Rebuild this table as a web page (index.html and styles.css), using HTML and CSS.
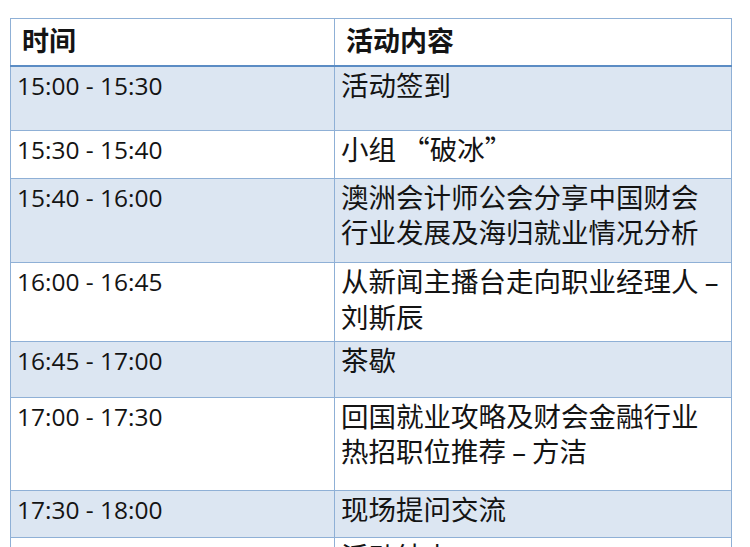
FILE: index.html
```html
<!DOCTYPE html>
<html lang="zh">
<head>
<meta charset="utf-8">
<link rel="stylesheet" href="styles.css">
</head>
<body>
<table class="agenda">
  <colgroup>
    <col class="col-time">
    <col class="col-act">
  </colgroup>
  <thead>
    <tr class="head">
      <th>时间</th>
      <th>活动内容</th>
    </tr>
  </thead>
  <tbody>
    <tr class="alt r1"><td class="time">15:00 - 15:30</td><td class="act">活动签到</td></tr>
    <tr class="r2"><td class="time">15:30 - 15:40</td><td class="act">小组 “破冰”</td></tr>
    <tr class="alt r3"><td class="time">15:40 - 16:00</td><td class="act">澳洲会计师公会分享中国财会<br>行业发展及海归就业情况分析</td></tr>
    <tr class="r4"><td class="time">16:00 - 16:45</td><td class="act">从新闻主播台走向职业经理人 <span class="lat">–</span><br>刘斯辰</td></tr>
    <tr class="alt r5"><td class="time">16:45 - 17:00</td><td class="act">茶歇</td></tr>
    <tr class="r6"><td class="time">17:00 - 17:30</td><td class="act">回国就业攻略及财会金融行业<br>热招职位推荐 <span class="lat">–</span> 方洁</td></tr>
    <tr class="alt r7"><td class="time">17:30 - 18:00</td><td class="act">现场提问交流</td></tr>
    <tr class="r8"><td class="time">18:00</td><td class="act">活动结束</td></tr>
  </tbody>
</table>
</body>
</html>
```

FILE: styles.css
```css
html, body {
  margin: 0;
  padding: 0;
  background: #ffffff;
  overflow: hidden;
}
body {
  padding: 18px 0 0 10px;
  font-family: "Open Sans", "Noto Sans CJK SC", sans-serif;
  color: #141414;
}
.agenda {
  border-collapse: collapse;
  table-layout: fixed;
  width: 721px;
}
.col-time { width: 324px; }
.col-act { width: 397px; }
.agenda th, .agenda td {
  border: 1px solid #8fb0d6;
  vertical-align: top;
  text-align: left;
  padding: 0 6px;
  white-space: nowrap;
}
.head { height: 47px; }
.head th {
  font-family: "Noto Sans CJK SC", sans-serif;
  font-weight: 700;
  font-size: 27px;
  line-height: 36px;
  padding: 3px 11px 0;
  border-bottom: 2px solid #5b8cc4;
}
.time {
  font-family: "Open Sans", sans-serif;
  font-size: 24.5px;
  line-height: 32px;
  padding-top: 3px !important;
}
.act {
  font-family: "Noto Sans CJK SC", sans-serif;
  font-size: 27.5px;
  line-height: 35px;
}
.lat {
  font-family: "Open Sans", sans-serif;
}
.alt td { background: #dce6f2; }
.r1 { height: 65px; }
.r2 { height: 48px; }
.r3 { height: 84px; }
.r4 { height: 79px; }
.r5 { height: 56px; }
.r6 { height: 93px; }
.r7 { height: 47px; }
.r8 { height: 46px; }
```
